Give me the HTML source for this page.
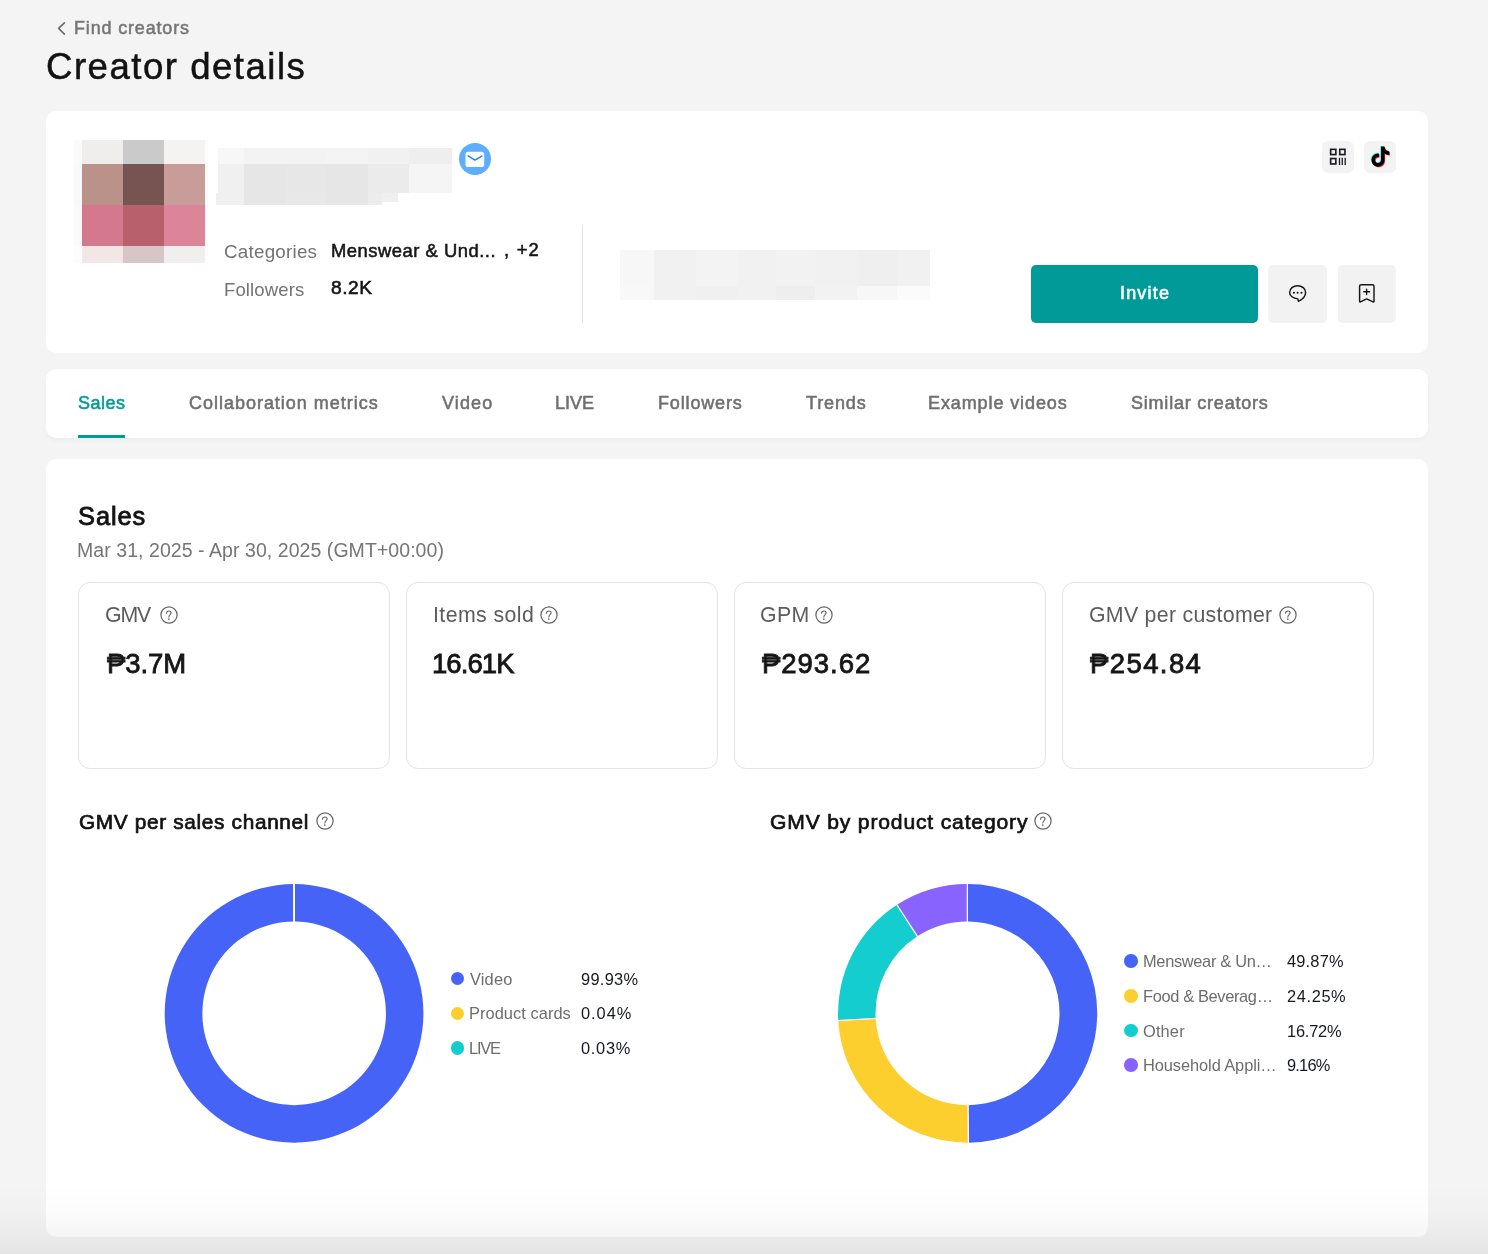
<!DOCTYPE html>
<html><head><meta charset="utf-8"><title>Creator details</title>
<style>
html,body{margin:0;padding:0}
body{width:1488px;height:1254px;overflow:hidden;background:#f4f4f4;position:relative;font-family:"Liberation Sans",sans-serif}
.t{position:absolute;line-height:1;white-space:nowrap;will-change:transform}
.r{position:absolute;box-sizing:content-box}
.a{position:absolute;overflow:visible}
</style></head><body>
<svg class="a" style="left:54px;top:20px" width="16" height="18" viewBox="0 0 16 18"><path d="M10.4 2.9 L4.6 8.4 L10.4 14.1" fill="none" stroke="#6a6a6a" stroke-width="1.6" stroke-linecap="round" stroke-linejoin="round"/></svg>
<div class="t" id="t0" style="left:73.98px;top:19.68px;font-size:17.9px;font-weight:400;color:#767676;letter-spacing:0.876px;-webkit-text-stroke:0.54px #767676;">Find creators</div>
<div class="t" id="t1" style="left:45.50px;top:48.77px;font-size:36.6px;font-weight:400;color:#121212;letter-spacing:1.501px;-webkit-text-stroke:0.5px #121212;">Creator details</div>
<div class="r" style="left:46px;top:111px;width:1382px;height:242px;background:#fff;border-radius:10px"></div>
<div class="r" style="left:74px;top:140px;width:8px;height:24px;background:#fafafa"></div>
<div class="r" style="left:82px;top:140px;width:40.5px;height:24px;background:#efeeed"></div>
<div class="r" style="left:122.5px;top:140px;width:41.5px;height:24px;background:#cacaca"></div>
<div class="r" style="left:164px;top:140px;width:40.5px;height:24px;background:#f4f3f1"></div>
<div class="r" style="left:204.5px;top:140px;width:3.5px;height:24px;background:#fbfbfb"></div>
<div class="r" style="left:74px;top:164px;width:8px;height:41px;background:#f9f9f9"></div>
<div class="r" style="left:82px;top:164px;width:40.5px;height:41px;background:#bb928a"></div>
<div class="r" style="left:122.5px;top:164px;width:41.5px;height:41px;background:#775352"></div>
<div class="r" style="left:164px;top:164px;width:40.5px;height:41px;background:#c89c99"></div>
<div class="r" style="left:204.5px;top:164px;width:3.5px;height:41px;background:#f9fafa"></div>
<div class="r" style="left:74px;top:205px;width:8px;height:40.69999999999999px;background:#fafafa"></div>
<div class="r" style="left:82px;top:205px;width:40.5px;height:40.69999999999999px;background:#d3788d"></div>
<div class="r" style="left:122.5px;top:205px;width:41.5px;height:40.69999999999999px;background:#b8606c"></div>
<div class="r" style="left:164px;top:205px;width:40.5px;height:40.69999999999999px;background:#dc8498"></div>
<div class="r" style="left:204.5px;top:205px;width:3.5px;height:40.69999999999999px;background:#fafafa"></div>
<div class="r" style="left:74px;top:245.7px;width:8px;height:17.80000000000001px;background:#fcfcfc"></div>
<div class="r" style="left:82px;top:245.7px;width:40.5px;height:17.80000000000001px;background:#f2e6e7"></div>
<div class="r" style="left:122.5px;top:245.7px;width:41.5px;height:17.80000000000001px;background:#d7c6c5"></div>
<div class="r" style="left:164px;top:245.7px;width:40.5px;height:17.80000000000001px;background:#f1eeee"></div>
<div class="r" style="left:204.5px;top:245.7px;width:3.5px;height:17.80000000000001px;background:#fcfcfc"></div>
<div class="r" style="left:218px;top:148px;width:26px;height:16px;background:#f7f7f7;"></div>
<div class="r" style="left:218px;top:164px;width:26px;height:29px;background:#f0f0f0;"></div>
<div class="r" style="left:244px;top:148px;width:42px;height:16px;background:#f3f3f3;"></div>
<div class="r" style="left:244px;top:164px;width:42px;height:29px;background:#e6e6e6;"></div>
<div class="r" style="left:286px;top:148px;width:40px;height:16px;background:#f3f3f3;"></div>
<div class="r" style="left:286px;top:164px;width:40px;height:29px;background:#e7e7e7;"></div>
<div class="r" style="left:326px;top:148px;width:42px;height:16px;background:#f4f4f4;"></div>
<div class="r" style="left:326px;top:164px;width:42px;height:29px;background:#e6e6e6;"></div>
<div class="r" style="left:368px;top:148px;width:41px;height:16px;background:#f1f1f1;"></div>
<div class="r" style="left:368px;top:164px;width:41px;height:29px;background:#ebebeb;"></div>
<div class="r" style="left:409px;top:148px;width:43px;height:16px;background:#eeeeee;"></div>
<div class="r" style="left:409px;top:164px;width:43px;height:29px;background:#f5f5f5;"></div>
<div class="r" style="left:216px;top:193px;width:28px;height:12px;background:#f0f0f0;"></div>
<div class="r" style="left:244px;top:193px;width:42px;height:12px;background:#e6e6e6;"></div>
<div class="r" style="left:286px;top:193px;width:40px;height:12px;background:#e8e8e8;"></div>
<div class="r" style="left:326px;top:193px;width:42px;height:12px;background:#e6e6e6;"></div>
<div class="r" style="left:368px;top:193px;width:14px;height:12px;background:#ececec;"></div>
<div class="r" style="left:382px;top:193px;width:16px;height:9px;background:#efefef;"></div>
<svg class="a" style="left:458px;top:142px" width="34" height="34" viewBox="0 0 34 34"><circle cx="17" cy="16.9" r="16" fill="#5daefe"/><rect x="7.5" y="9.8" width="18.7" height="15.2" rx="2.6" fill="#fff"/><path d="M10.1 13.8 L16.9 18.2 L23.9 14.1" fill="none" stroke="#1e88fe" stroke-width="1.5" stroke-linecap="round" stroke-linejoin="round"/></svg>
<div class="t" id="t2" style="left:223.55px;top:242.72px;font-size:18.8px;font-weight:400;color:#737373;letter-spacing:0.241px;">Categories</div>
<div class="t" id="t3" style="left:330.59px;top:241.75px;font-size:18.4px;font-weight:400;color:#161616;letter-spacing:0.509px;-webkit-text-stroke:0.55px #161616;">Menswear &amp; Und...</div>
<div class="t" id="t4" style="left:503.55px;top:241.01px;font-size:18.4px;font-weight:400;color:#161616;letter-spacing:1.215px;-webkit-text-stroke:0.55px #161616;">, +2</div>
<div class="t" id="t5" style="left:223.59px;top:280.64px;font-size:18.5px;font-weight:400;color:#737373;letter-spacing:0.126px;">Followers</div>
<div class="t" id="t6" style="left:330.57px;top:277.76px;font-size:19.2px;font-weight:400;color:#161616;letter-spacing:0.496px;-webkit-text-stroke:0.58px #161616;">8.2K</div>
<div class="r" style="left:582px;top:225px;width:1px;height:98px;background:#e2e2e2;"></div>
<div class="r" style="left:620px;top:250px;width:34px;height:36px;background:#f7f7f7;"></div>
<div class="r" style="left:620px;top:286px;width:34px;height:14px;background:#f8f8f8;"></div>
<div class="r" style="left:654px;top:250px;width:42px;height:36px;background:#f1f1f1;"></div>
<div class="r" style="left:654px;top:286px;width:42px;height:14px;background:#f1f1f1;"></div>
<div class="r" style="left:696px;top:250px;width:42px;height:36px;background:#f3f3f3;"></div>
<div class="r" style="left:696px;top:286px;width:42px;height:14px;background:#f0f0f0;"></div>
<div class="r" style="left:738px;top:250px;width:38px;height:36px;background:#f1f1f1;"></div>
<div class="r" style="left:738px;top:286px;width:38px;height:14px;background:#f1f1f1;"></div>
<div class="r" style="left:776px;top:250px;width:39px;height:36px;background:#f2f2f2;"></div>
<div class="r" style="left:776px;top:286px;width:39px;height:14px;background:#eeeeee;"></div>
<div class="r" style="left:815px;top:250px;width:42px;height:36px;background:#f1f1f1;"></div>
<div class="r" style="left:815px;top:286px;width:42px;height:14px;background:#f2f2f2;"></div>
<div class="r" style="left:857px;top:250px;width:40px;height:36px;background:#efefef;"></div>
<div class="r" style="left:857px;top:286px;width:40px;height:14px;background:#f7f7f7;"></div>
<div class="r" style="left:897px;top:250px;width:33px;height:36px;background:#f1f1f1;"></div>
<div class="r" style="left:897px;top:286px;width:33px;height:14px;background:#fbfbfb;"></div>
<div class="r" style="left:1322px;top:141px;width:32px;height:32px;background:#f3f3f3;border-radius:6px"></div>
<svg class="a" style="left:1322px;top:141px" width="32" height="32" viewBox="0 0 32 32" fill="none" stroke="#1b1b25" stroke-width="1.65"><rect x="8.65" y="8.35" width="5.2" height="5.2"/><rect x="17.75" y="8.35" width="5.2" height="5.2"/><rect x="8.65" y="17.55" width="5.2" height="5.4"/><path d="M17.5 16.7V23.9M20.25 16.7V23.9M23.2 16.7V23.9" stroke-width="1.3"/></svg>
<div class="r" style="left:1364px;top:141px;width:32px;height:32px;background:#f3f3f3;border-radius:6px"></div>
<svg class="a" style="left:1370.3px;top:146px" width="20" height="22" viewBox="-0.5 -0.5 18 20"><path d="M12.6 0h-3.2v12.3c0 1.5-1.2 2.7-2.7 2.7S4 13.8 4 12.3s1.2-2.7 2.7-2.7c.3 0 .6 0 .8.1V6.4c-.3 0-.5-.1-.8-.1C3.4 6.3.8 9 .8 12.3s2.7 6 5.9 6 5.9-2.7 5.9-6V6.1c1.2.9 2.7 1.4 4.3 1.4V4.3c-2.4 0-4.300-1.900-4.300-4.3z" fill="#25f4ee" transform="translate(-0.6,-0.6)"/><path d="M12.6 0h-3.2v12.3c0 1.5-1.2 2.7-2.7 2.7S4 13.8 4 12.3s1.2-2.7 2.7-2.7c.3 0 .6 0 .8.1V6.4c-.3 0-.5-.1-.8-.1C3.4 6.3.8 9 .8 12.3s2.7 6 5.9 6 5.9-2.7 5.9-6V6.1c1.2.9 2.7 1.4 4.3 1.4V4.3c-2.4 0-4.300-1.900-4.300-4.3z" fill="#fe2c55" transform="translate(0.6,0.6)"/><path d="M12.6 0h-3.2v12.3c0 1.5-1.2 2.7-2.7 2.7S4 13.8 4 12.3s1.2-2.7 2.7-2.7c.3 0 .6 0 .8.1V6.4c-.3 0-.5-.1-.8-.1C3.4 6.3.8 9 .8 12.3s2.7 6 5.9 6 5.9-2.7 5.9-6V6.1c1.2.9 2.7 1.4 4.3 1.4V4.3c-2.4 0-4.300-1.900-4.300-4.3z" fill="#000"/></svg>
<div class="r" style="left:1031px;top:265px;width:227px;height:58px;background:#009b98;border-radius:5px"></div>
<div class="t" id="t7" style="left:1119.59px;top:283.63px;font-size:18.0px;font-weight:400;color:#ffffff;letter-spacing:1.178px;-webkit-text-stroke:0.54px #ffffff;">Invite</div>
<div class="r" style="left:1268px;top:265px;width:59px;height:58px;background:#f2f2f2;border-radius:5px"></div>
<svg class="a" style="left:1286px;top:282px" width="24" height="24" viewBox="0 0 24 24" fill="none" stroke="#161616" stroke-width="1.45" stroke-linejoin="round"><path d="M12.4 19.3 L11.9 16.9 C7.2 16.4 3.6 13.8 3.6 10.5 C3.6 6.7 7.2 3.7 11.6 3.7 C16 3.7 19.6 6.7 19.6 10.5 C19.6 14.2 16.5 17.4 12.4 19.3 Z"/><circle cx="7.9" cy="10.7" r="1.05" fill="#161616" stroke="none"/><circle cx="11.6" cy="10.7" r="1.05" fill="#161616" stroke="none"/><circle cx="15.5" cy="10.7" r="1.05" fill="#161616" stroke="none"/></svg>
<div class="r" style="left:1338px;top:265px;width:58px;height:58px;background:#f2f2f2;border-radius:5px"></div>
<svg class="a" style="left:1355px;top:282px" width="24" height="24" viewBox="0 0 24 24" fill="none" stroke="#161616" stroke-width="1.45" stroke-linejoin="round" stroke-linecap="round"><path d="M4.6 4.3 Q4.6 2.8 6.1 2.8 H17.5 Q19 2.8 19 4.3 V19.3 Q19 20.3 18.1 19.8 L11.7 16.9 L5.5 19.8 Q4.6 20.3 4.6 19.3 Z"/><path d="M11.6 7.1V12.5M8.75 9.7H14.6" stroke-width="1.35"/></svg>
<div class="r" style="left:46px;top:369px;width:1382px;height:69px;background:#fff;border-radius:10px;box-shadow:0 2px 5px rgba(0,0,0,0.035)"></div>
<div class="t" id="t8" style="left:77.56px;top:393.79px;font-size:18.0px;font-weight:400;color:#009b98;letter-spacing:0.517px;-webkit-text-stroke:0.54px #009b98;">Sales</div>
<div class="t" id="t9" style="left:188.70px;top:393.50px;font-size:18.0px;font-weight:400;color:#6f6f6f;letter-spacing:0.981px;-webkit-text-stroke:0.54px #6f6f6f;">Collaboration metrics</div>
<div class="t" id="t10" style="left:441.78px;top:393.71px;font-size:18.0px;font-weight:400;color:#6f6f6f;letter-spacing:1.126px;-webkit-text-stroke:0.54px #6f6f6f;">Video</div>
<div class="t" id="t11" style="left:554.94px;top:393.53px;font-size:18.0px;font-weight:400;color:#6f6f6f;letter-spacing:-0.043px;-webkit-text-stroke:0.54px #6f6f6f;">LIVE</div>
<div class="t" id="t12" style="left:657.69px;top:393.53px;font-size:18.0px;font-weight:400;color:#6f6f6f;letter-spacing:0.851px;-webkit-text-stroke:0.54px #6f6f6f;">Followers</div>
<div class="t" id="t13" style="left:805.76px;top:393.53px;font-size:18.0px;font-weight:400;color:#6f6f6f;letter-spacing:0.873px;-webkit-text-stroke:0.54px #6f6f6f;">Trends</div>
<div class="t" id="t14" style="left:927.69px;top:393.53px;font-size:18.0px;font-weight:400;color:#6f6f6f;letter-spacing:0.894px;-webkit-text-stroke:0.54px #6f6f6f;">Example videos</div>
<div class="t" id="t15" style="left:1130.55px;top:393.53px;font-size:18.0px;font-weight:400;color:#6f6f6f;letter-spacing:0.784px;-webkit-text-stroke:0.54px #6f6f6f;">Similar creators</div>
<div class="r" style="left:78px;top:435px;width:47px;height:3px;background:#009b98;"></div>
<div class="r" style="left:46px;top:459px;width:1382px;height:778px;background:#fff;border-radius:10px"></div>
<div class="t" id="t16" style="left:77.64px;top:503.70px;font-size:25.4px;font-weight:400;color:#121212;letter-spacing:0.940px;-webkit-text-stroke:0.84px #121212;">Sales</div>
<div class="t" id="t17" style="left:76.75px;top:540.52px;font-size:19.5px;font-weight:400;color:#767676;letter-spacing:0.057px;">Mar 31, 2025 - Apr 30, 2025 (GMT+00:00)</div>
<div class="r" style="left:78px;top:582px;width:310px;height:185px;background:#fff;border:1px solid #e3e3e3;border-radius:12px"></div>
<div class="t" id="t18" style="left:104.93px;top:604.77px;font-size:21.3px;font-weight:400;color:#5c5c5c;letter-spacing:-1.168px;">GMV</div>
<svg class="a" style="left:158.60px;top:604.50px" width="20" height="20" viewBox="0 0 20 20"><circle cx="10" cy="10" r="8.1" fill="none" stroke="#666" stroke-width="1.2"/><path d="M7.5 8.1 C7.6 6.7 8.6 5.95 9.85 5.95 C11.1 5.95 12.1 6.75 12.1 7.85 C12.1 9.4 10 9.9 9.8 12.0" fill="none" stroke="#666" stroke-width="1.15" stroke-linecap="round"/><circle cx="9.8" cy="14.05" r="0.85" fill="#666"/></svg>
<div class="t" id="t19" style="left:106.73px;top:649.99px;font-size:27.5px;font-weight:400;color:#161616;letter-spacing:-0.059px;-webkit-text-stroke:0.82px #161616;">&#8369;3.7M</div>
<div class="r" style="left:406px;top:582px;width:310px;height:185px;background:#fff;border:1px solid #e3e3e3;border-radius:12px"></div>
<div class="t" id="t20" style="left:432.72px;top:604.59px;font-size:21.3px;font-weight:400;color:#5c5c5c;letter-spacing:0.424px;">Items sold</div>
<svg class="a" style="left:539.20px;top:604.50px" width="20" height="20" viewBox="0 0 20 20"><circle cx="10" cy="10" r="8.1" fill="none" stroke="#666" stroke-width="1.2"/><path d="M7.5 8.1 C7.6 6.7 8.6 5.95 9.85 5.95 C11.1 5.95 12.1 6.75 12.1 7.85 C12.1 9.4 10 9.9 9.8 12.0" fill="none" stroke="#666" stroke-width="1.15" stroke-linecap="round"/><circle cx="9.8" cy="14.05" r="0.85" fill="#666"/></svg>
<div class="t" id="t21" style="left:431.67px;top:649.99px;font-size:27.5px;font-weight:400;color:#161616;letter-spacing:-0.922px;-webkit-text-stroke:0.82px #161616;">16.61K</div>
<div class="r" style="left:734px;top:582px;width:310px;height:185px;background:#fff;border:1px solid #e3e3e3;border-radius:12px"></div>
<div class="t" id="t22" style="left:759.54px;top:604.77px;font-size:21.3px;font-weight:400;color:#5c5c5c;letter-spacing:0.396px;">GPM</div>
<svg class="a" style="left:814.20px;top:604.50px" width="20" height="20" viewBox="0 0 20 20"><circle cx="10" cy="10" r="8.1" fill="none" stroke="#666" stroke-width="1.2"/><path d="M7.5 8.1 C7.6 6.7 8.6 5.95 9.85 5.95 C11.1 5.95 12.1 6.75 12.1 7.85 C12.1 9.4 10 9.9 9.8 12.0" fill="none" stroke="#666" stroke-width="1.15" stroke-linecap="round"/><circle cx="9.8" cy="14.05" r="0.85" fill="#666"/></svg>
<div class="t" id="t23" style="left:761.73px;top:649.99px;font-size:27.5px;font-weight:400;color:#161616;letter-spacing:0.973px;-webkit-text-stroke:0.82px #161616;">&#8369;293.62</div>
<div class="r" style="left:1062px;top:582px;width:310px;height:185px;background:#fff;border:1px solid #e3e3e3;border-radius:12px"></div>
<div class="t" id="t24" style="left:1088.63px;top:604.52px;font-size:21.3px;font-weight:400;color:#5c5c5c;letter-spacing:0.297px;">GMV per customer</div>
<svg class="a" style="left:1278.30px;top:604.50px" width="20" height="20" viewBox="0 0 20 20"><circle cx="10" cy="10" r="8.1" fill="none" stroke="#666" stroke-width="1.2"/><path d="M7.5 8.1 C7.6 6.7 8.6 5.95 9.85 5.95 C11.1 5.95 12.1 6.75 12.1 7.85 C12.1 9.4 10 9.9 9.8 12.0" fill="none" stroke="#666" stroke-width="1.15" stroke-linecap="round"/><circle cx="9.8" cy="14.05" r="0.85" fill="#666"/></svg>
<div class="t" id="t25" style="left:1089.69px;top:649.99px;font-size:27.5px;font-weight:400;color:#161616;letter-spacing:1.406px;-webkit-text-stroke:0.82px #161616;">&#8369;254.84</div>
<div class="t" id="t26" style="left:78.66px;top:811.58px;font-size:20.8px;font-weight:400;color:#121212;letter-spacing:0.664px;-webkit-text-stroke:0.69px #121212;">GMV per sales channel</div>
<svg class="a" style="left:314.70px;top:811.40px" width="20" height="20" viewBox="0 0 20 20"><circle cx="10" cy="10" r="8.1" fill="none" stroke="#666" stroke-width="1.2"/><path d="M7.5 8.1 C7.6 6.7 8.6 5.95 9.85 5.95 C11.1 5.95 12.1 6.75 12.1 7.85 C12.1 9.4 10 9.9 9.8 12.0" fill="none" stroke="#666" stroke-width="1.15" stroke-linecap="round"/><circle cx="9.8" cy="14.05" r="0.85" fill="#666"/></svg>
<div class="t" id="t27" style="left:769.69px;top:810.94px;font-size:21.1px;font-weight:400;color:#121212;letter-spacing:0.830px;-webkit-text-stroke:0.70px #121212;">GMV by product category</div>
<svg class="a" style="left:1033.20px;top:811.40px" width="20" height="20" viewBox="0 0 20 20"><circle cx="10" cy="10" r="8.1" fill="none" stroke="#666" stroke-width="1.2"/><path d="M7.5 8.1 C7.6 6.7 8.6 5.95 9.85 5.95 C11.1 5.95 12.1 6.75 12.1 7.85 C12.1 9.4 10 9.9 9.8 12.0" fill="none" stroke="#666" stroke-width="1.15" stroke-linecap="round"/><circle cx="9.8" cy="14.05" r="0.85" fill="#666"/></svg>
<svg class="a" style="left:162.65px;top:882.4499999999999px" width="262.7" height="262.7" viewBox="162.65 882.4499999999999 262.7 262.7"><path d="M294.00 884.45 A129.35 129.35 0 1 1 293.43 884.45 L293.60 922.00 A91.8 91.8 0 1 0 294.00 922.00 Z" fill="#4563f6"/><path d="M293.43 884.45 A129.35 129.35 0 0 1 293.76 884.45 L293.83 922.00 A91.8 91.8 0 0 0 293.60 922.00 Z" fill="#fdcf2e"/><path d="M293.76 884.45 A129.35 129.35 0 0 1 294.00 884.45 L294.00 922.00 A91.8 91.8 0 0 0 293.83 922.00 Z" fill="#13cdcf"/><line x1="294.00" y1="923.00" x2="294.00" y2="883.45" stroke="#fff" stroke-width="1.25"/><line x1="293.60" y1="923.00" x2="293.43" y2="883.45" stroke="#fff" stroke-width="1.25"/><line x1="293.83" y1="923.00" x2="293.75" y2="883.45" stroke="#fff" stroke-width="1.25"/></svg>
<svg class="a" style="left:836.05px;top:882.4499999999999px" width="262.7" height="262.7" viewBox="836.05 882.4499999999999 262.7 262.7"><path d="M967.40 884.45 A129.35 129.35 0 0 1 968.46 1143.15 L968.15 1105.60 A91.8 91.8 0 0 0 967.40 922.00 Z" fill="#4563f6"/><path d="M968.46 1143.15 A129.35 129.35 0 0 1 838.25 1020.95 L875.74 1018.87 A91.8 91.8 0 0 0 968.15 1105.60 Z" fill="#fdcf2e"/><path d="M838.25 1020.95 A129.35 129.35 0 0 1 897.00 905.29 L917.43 936.79 A91.8 91.8 0 0 0 875.74 1018.87 Z" fill="#13cdcf"/><path d="M897.00 905.29 A129.35 129.35 0 0 1 967.40 884.45 L967.40 922.00 A91.8 91.8 0 0 0 917.43 936.79 Z" fill="#8863fe"/><line x1="967.40" y1="923.00" x2="967.40" y2="883.45" stroke="#fff" stroke-width="1.25"/><line x1="968.14" y1="1104.60" x2="968.46" y2="1144.15" stroke="#fff" stroke-width="1.25"/><line x1="876.74" y1="1018.82" x2="837.25" y2="1021.00" stroke="#fff" stroke-width="1.25"/><line x1="917.98" y1="937.63" x2="896.45" y2="904.45" stroke="#fff" stroke-width="1.25"/></svg>
<div class="r" style="left:450.95px;top:971.90px;width:13.1px;height:13.1px;border-radius:50%;background:#4563f6"></div>
<div class="t" id="t28" style="left:470.05px;top:970.71px;font-size:16.4px;font-weight:400;color:#6d6d6d;letter-spacing:0.164px;">Video</div>
<div class="t" id="t29" style="left:580.63px;top:970.71px;font-size:16.4px;font-weight:400;color:#161823;letter-spacing:0.281px;">99.93%</div>
<div class="r" style="left:450.95px;top:1006.95px;width:13.1px;height:13.1px;border-radius:50%;background:#fdcf2e"></div>
<div class="t" id="t30" style="left:468.86px;top:1004.53px;font-size:16.4px;font-weight:400;color:#6d6d6d;letter-spacing:0.057px;">Product cards</div>
<div class="t" id="t31" style="left:581.07px;top:1004.69px;font-size:16.4px;font-weight:400;color:#161823;letter-spacing:0.965px;">0.04%</div>
<div class="r" style="left:450.95px;top:1041.45px;width:13.1px;height:13.1px;border-radius:50%;background:#13cdcf"></div>
<div class="t" id="t32" style="left:468.54px;top:1039.53px;font-size:16.4px;font-weight:400;color:#6d6d6d;letter-spacing:-1.214px;">LIVE</div>
<div class="t" id="t33" style="left:581.07px;top:1039.54px;font-size:16.4px;font-weight:400;color:#161823;letter-spacing:0.715px;">0.03%</div>
<div class="r" style="left:1124.30px;top:954.30px;width:13.6px;height:13.6px;border-radius:50%;background:#4563f6"></div>
<div class="t" id="t34" style="left:1142.73px;top:952.79px;font-size:16.4px;font-weight:400;color:#6d6d6d;letter-spacing:-0.320px;">Menswear &amp; Un&#8230;</div>
<div class="t" id="t35" style="left:1286.83px;top:952.61px;font-size:16.4px;font-weight:400;color:#161823;letter-spacing:0.187px;">49.87%</div>
<div class="r" style="left:1124.30px;top:989.00px;width:13.6px;height:13.6px;border-radius:50%;background:#fdcf2e"></div>
<div class="t" id="t36" style="left:1142.73px;top:987.69px;font-size:16.4px;font-weight:400;color:#6d6d6d;letter-spacing:-0.343px;">Food &amp; Beverag&#8230;</div>
<div class="t" id="t37" style="left:1286.76px;top:987.61px;font-size:16.4px;font-weight:400;color:#161823;letter-spacing:0.621px;">24.25%</div>
<div class="r" style="left:1124.30px;top:1023.70px;width:13.6px;height:13.6px;border-radius:50%;background:#13cdcf"></div>
<div class="t" id="t38" style="left:1142.86px;top:1023.14px;font-size:16.4px;font-weight:400;color:#6d6d6d;letter-spacing:0.148px;">Other</div>
<div class="t" id="t39" style="left:1286.75px;top:1022.65px;font-size:16.4px;font-weight:400;color:#161823;letter-spacing:-0.210px;">16.72%</div>
<div class="r" style="left:1124.30px;top:1058.40px;width:13.6px;height:13.6px;border-radius:50%;background:#8863fe"></div>
<div class="t" id="t40" style="left:1142.73px;top:1056.93px;font-size:16.4px;font-weight:400;color:#6d6d6d;letter-spacing:-0.078px;">Household Appli&#8230;</div>
<div class="t" id="t41" style="left:1286.50px;top:1056.79px;font-size:16.4px;font-weight:400;color:#161823;letter-spacing:-0.777px;">9.16%</div>
<div class="r" style="left:0;top:1184px;width:1488px;height:70px;background:linear-gradient(to bottom, rgba(0,0,0,0) 0px, rgba(0,0,0,0.012) 26px, rgba(0,0,0,0.04) 52px, rgba(0,0,0,0.066) 70px)"></div>
</body></html>
